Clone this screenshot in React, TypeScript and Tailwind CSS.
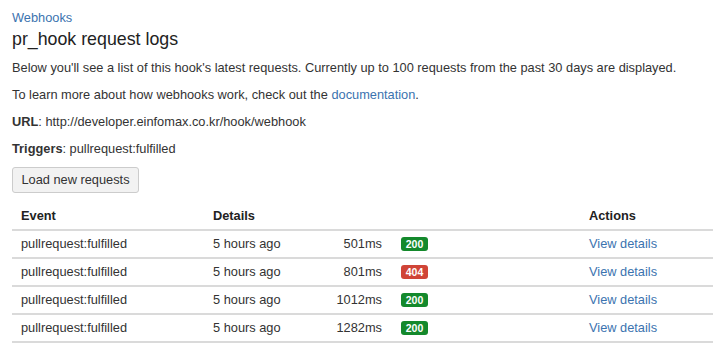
const rows = [
  { ms: "501ms", code: "200" },
  { ms: "801ms", code: "404" },
  { ms: "1012ms", code: "200" },
  { ms: "1282ms", code: "200" },
];

export default function App() {
  return (
    <main
      className="min-h-screen bg-white text-[#333] text-[12.8px] leading-5 px-3 pt-2"
      style={{ fontFamily: '"Liberation Sans", Arial, sans-serif' }}
    >
      <a href="#" className="block text-[#3b73af] leading-5">
        Webhooks
      </a>
      <h1 className="text-[17.8px] leading-[22px] font-normal text-[#222]">pr_hook request logs</h1>

      <p className="mt-[8px]">
        Below you'll see a list of this hook's latest requests. Currently up to 100 requests from the past 30 days are displayed.
      </p>
      <p className="mt-[7px]">
        To learn more about how webhooks work, check out the{" "}
        <a href="#" className="text-[#3b73af]">documentation</a>.
      </p>
      <p className="mt-[7px]">
        <b>URL</b>: http://developer.einfomax.co.kr/hook/webhook
      </p>
      <p className="mt-[7px]">
        <b>Triggers</b>: pullrequest:fulfilled
      </p>

      <button className="mt-2 h-[26px] w-[127px] rounded-[3px] border border-[#ccc] bg-[#f2f2f2] text-[#333] text-[12.8px]">
        Load new requests
      </button>

      {/* Request table */}
      <div className="mt-[10px] w-[701px]">
        <div className="flex h-[28px] items-center border-b-2 border-[#dadada] font-bold text-[#222]">
          <span className="w-[192px] pl-[9px]">Event</span>
          <span className="w-[376px] pl-[9px]">Details</span>
          <span className="pl-[9px]">Actions</span>
        </div>
        {rows.map((r, i) => (
          <div key={i} className="flex h-[28px] items-center border-b-2 border-[#dadada]">
            <span className="w-[192px] pl-[9px]">pullrequest:fulfilled</span>
            <div className="flex w-[376px] items-center pl-[9px]">
              <span className="flex w-[169px] justify-between">
                <span>5 hours ago</span>
                <span>{r.ms}</span>
              </span>
              <span
                className={`ml-[19px] inline-flex h-[14px] w-[27px] items-center justify-center rounded-[3px] text-[10.5px] font-bold leading-none text-white ${
                  r.code === "200" ? "bg-[#14892c]" : "bg-[#d04437]"
                }`}
              >
                {r.code}
              </span>
            </div>
            <a href="#" className="pl-[9px] text-[#3b73af]">
              View details
            </a>
          </div>
        ))}
      </div>
    </main>
  );
}
